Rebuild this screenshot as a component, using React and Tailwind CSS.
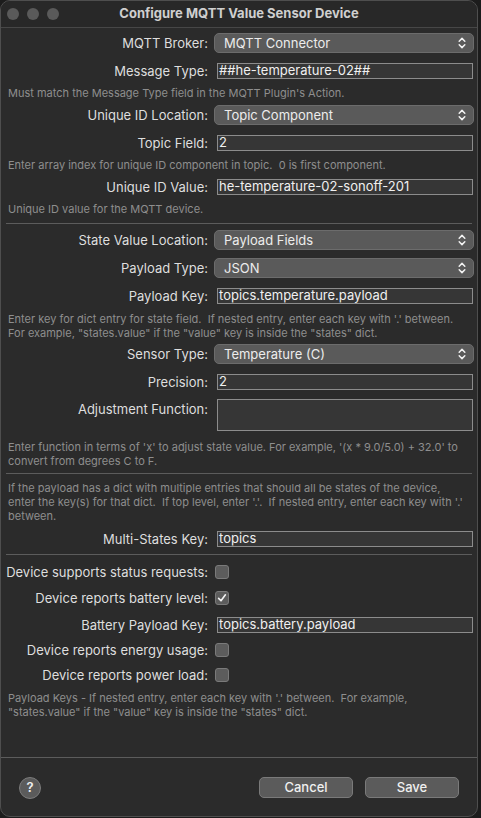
import React from "react";

const font = { fontFamily: "Inter, 'Noto Sans', 'Liberation Sans', sans-serif" };

function Chevrons() {
  return (
    <svg width="8" height="12" viewBox="0 0 8 12" className="block">
      <path d="M1.2 4.2 L4 1.4 L6.8 4.2" fill="none" stroke="#f2f2f2" strokeWidth="1.5" strokeLinecap="round" strokeLinejoin="round" />
      <path d="M1.2 7.8 L4 10.6 L6.8 7.8" fill="none" stroke="#f2f2f2" strokeWidth="1.5" strokeLinecap="round" strokeLinejoin="round" />
    </svg>
  );
}

function Label({ children, top }) {
  return (
    <div className={"w-[207px] shrink-0 text-right text-[13px] text-[#dedede] leading-[16px] " + (top ? "pt-[2px]" : "")}>
      {children}
    </div>
  );
}

function PopupRow({ label, value, mt }) {
  return (
    <div className={"flex items-center h-[20px] " + mt}>
      <Label>{label}</Label>
      <div className="ml-[6px] w-[260px] h-[20px] rounded-[5px] bg-[#5a5a5a] border border-[#6c6c6c] flex items-center pl-[9px] pr-[7px]">
        <span className="flex-1 text-[13px] text-[#ececec] leading-[16px] -mt-[1px]">{value}</span>
        <Chevrons />
      </div>
    </div>
  );
}

function FieldRow({ label, value, mt }) {
  return (
    <div className={"flex items-center h-[16px] " + mt}>
      <Label>{label}</Label>
      <div className="ml-[9px] w-[256px] h-[16px] bg-[#363636] border border-[#8c8c8c] flex items-end pl-[1px]">
        <span className="text-[13px] text-[#f0f0f0] leading-[15px]">{value}</span>
      </div>
    </div>
  );
}

function Help({ children, mt }) {
  return (
    <div className={"px-[7px] text-[11px] leading-[14px] text-[#8e8e8e] " + mt}>{children}</div>
  );
}

function Sep({ mt }) {
  return <div className={"mx-[5px] h-px bg-[#5c5c5c] " + mt} />;
}

function CheckRow({ label, checked, mt }) {
  return (
    <div className={"flex items-center h-[14px] " + mt}>
      <Label>{label}</Label>
      <div className="ml-[7px] w-[14px] h-[14px] rounded-[3px] bg-[#5c5c5c] border border-[#7a7a7a] flex items-center justify-center">
        {checked && (
          <svg width="10" height="10" viewBox="0 0 10 10">
            <path d="M1.6 5.4 L4 7.8 L8.4 1.8" fill="none" stroke="#f4f4f4" strokeWidth="1.6" strokeLinecap="round" strokeLinejoin="round" />
          </svg>
        )}
      </div>
    </div>
  );
}

export default function App() {
  return (
    <div className="w-[481px] h-[818px] bg-[#1c1c1c] overflow-hidden" style={font}>
      <div className="w-[478px] h-[817px] bg-[#2b2b2b] rounded-[10px] border border-[#4e4e4e] overflow-hidden flex flex-col">
        {/* Title bar */}
        <div className="h-[27px] shrink-0 bg-[#282828] border-b border-[#474747] flex items-center relative">
          <div className="flex gap-[8px] pl-[6px]">
            <div className="w-[12px] h-[12px] rounded-full bg-[#5a5a5a]" />
            <div className="w-[12px] h-[12px] rounded-full bg-[#5a5a5a]" />
            <div className="w-[12px] h-[12px] rounded-full bg-[#5a5a5a]" />
          </div>
          <div className="absolute inset-0 flex items-center justify-center text-[13px] font-bold text-[#cfcfcf]">
            Configure MQTT Value Sensor Device
          </div>
        </div>

        <div className="flex flex-col">
          <PopupRow label="MQTT Broker:" value="MQTT Connector" mt="mt-[5px]" />
          <FieldRow label="Message Type:" value="##he-temperature-02##" mt="mt-[10px]" />
          <Help mt="mt-[7px]">Must match the Message Type field in the MQTT Plugin's Action.</Help>
          <PopupRow label="Unique ID Location:" value="Topic Component" mt="mt-[5px]" />
          <FieldRow label="Topic Field:" value="2" mt="mt-[10px]" />
          <Help mt="mt-[7px]">Enter array index for unique ID component in topic.&nbsp; 0 is first component.</Help>
          <FieldRow label="Unique ID Value:" value="he-temperature-02-sonoff-201" mt="mt-[7px]" />
          <Help mt="mt-[7px]">Unique ID value for the MQTT device.</Help>
          <Sep mt="mt-[7px]" />
          <PopupRow label="State Value Location:" value="Payload Fields" mt="mt-[6px]" />
          <PopupRow label="Payload Type:" value="JSON" mt="mt-[8px]" />
          <FieldRow label="Payload Key:" value="topics.temperature.payload" mt="mt-[10px]" />
          <Help mt="mt-[8px]">
            Enter key for dict entry for state field.&nbsp; If nested entry, enter each key with '.' between.
            <br />
            For example, "states.value" if the "value" key is inside the "states" dict.
          </Help>
          <PopupRow label="Sensor Type:" value="Temperature (C)" mt="mt-[4px]" />
          <FieldRow label="Precision:" value="2" mt="mt-[10px]" />
          <div className="flex items-start mt-[9px]">
            <Label top>Adjustment Function:</Label>
            <div className="ml-[9px] w-[256px] h-[32px] bg-[#363636] border border-[#8c8c8c]" />
          </div>
          <Help mt="mt-[9px]">
            Enter function in terms of 'x' to adjust state value. For example, '(x * 9.0/5.0) + 32.0' to
            <br />
            convert from degrees C to F.
          </Help>
          <Sep mt="mt-[5px]" />
          <Help mt="mt-[7px]">
            If the payload has a dict with multiple entries that should all be states of the device,
            <br />
            enter the key(s) for that dict.&nbsp; If top level, enter '.'.&nbsp; If nested entry, enter each key with '.'
            <br />
            between.
          </Help>
          <FieldRow label="Multi-States Key:" value="topics" mt="mt-[8px]" />
          <Sep mt="mt-[7px]" />
          <CheckRow label="Device supports status requests:" mt="mt-[10px]" />
          <CheckRow label="Device reports battery level:" checked mt="mt-[12px]" />
          <FieldRow label="Battery Payload Key:" value="topics.battery.payload" mt="mt-[12px]" />
          <CheckRow label="Device reports energy usage:" mt="mt-[10px]" />
          <CheckRow label="Device reports power load:" mt="mt-[11px]" />
          <Help mt="mt-[9px]">
            Payload Keys - If nested entry, enter each key with '.' between.&nbsp; For example,
            <br />
            "states.value" if the "value" key is inside the "states" dict.
          </Help>
        </div>

        <div className="mt-[38px] h-px bg-[#5c5c5c]" />
        <div className="flex items-center h-[21px] mt-[19px]">
          <div className="ml-[18px] w-[22px] h-[22px] rounded-full bg-[#5b5b5b] border border-[#7c7c7c] flex items-center justify-center text-[13px] font-semibold text-[#f0f0f0]">
            ?
          </div>
          <div className="flex-1" />
          <div className="w-[94px] h-[21px] rounded-[5px] bg-[#5b5b5b] border border-[#7a7a7a] flex items-center justify-center text-[13px] font-medium text-[#f0f0f0]">
            Cancel
          </div>
          <div className="ml-[12px] mr-[18px] w-[94px] h-[21px] rounded-[5px] bg-[#5b5b5b] border border-[#7a7a7a] flex items-center justify-center text-[13px] font-medium text-[#f0f0f0]">
            Save
          </div>
        </div>
      </div>
    </div>
  );
}
